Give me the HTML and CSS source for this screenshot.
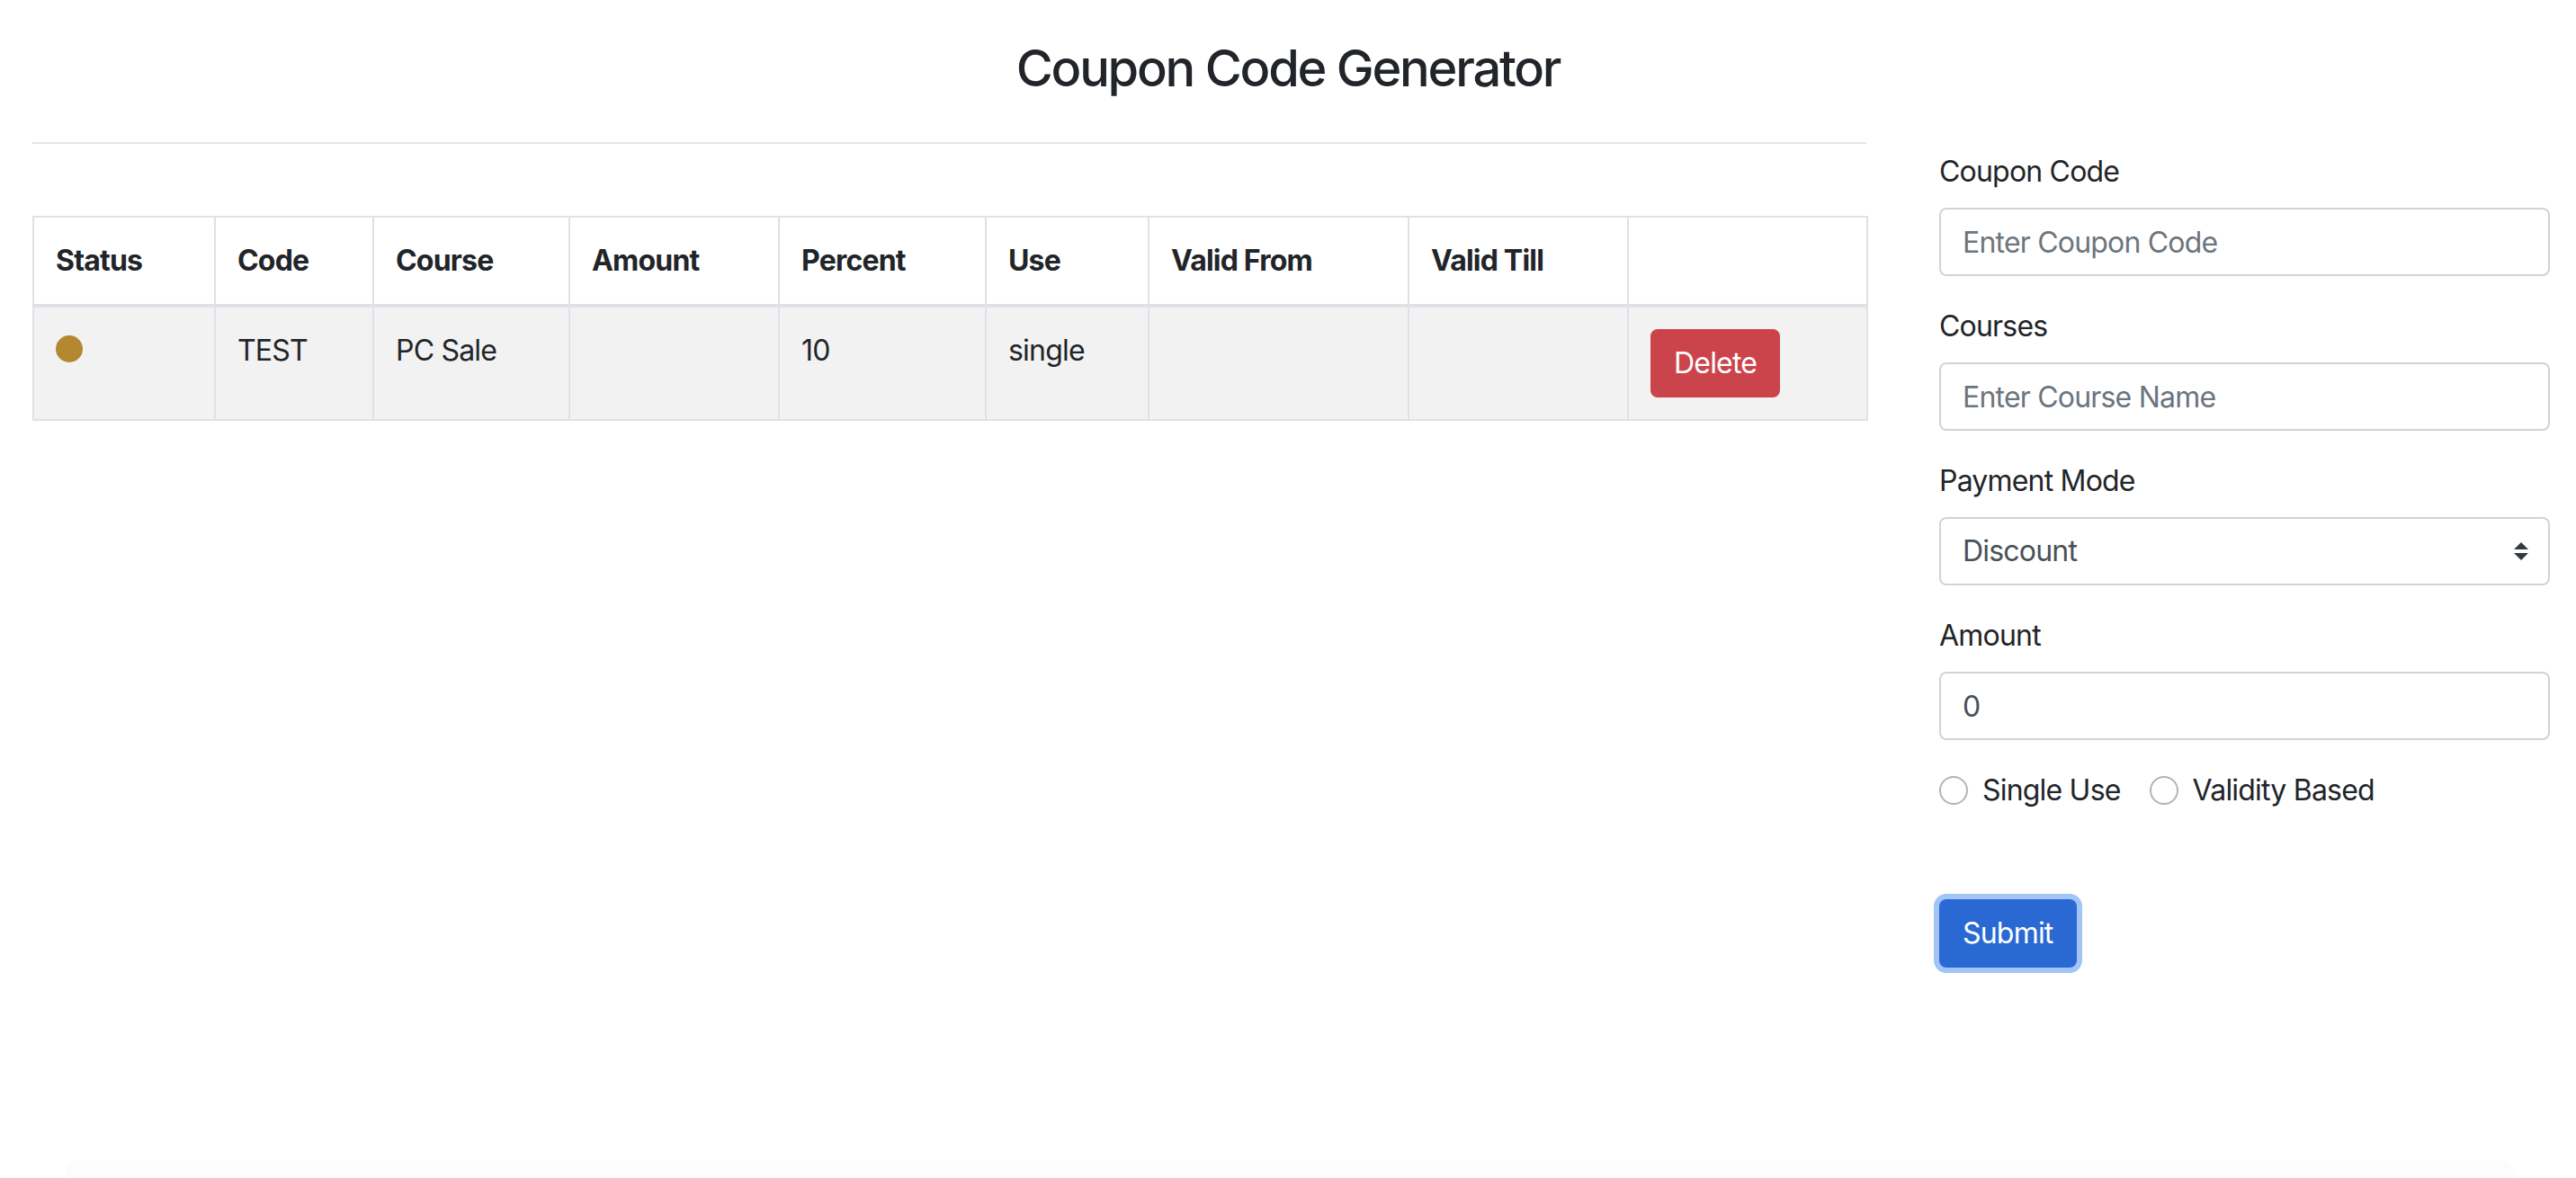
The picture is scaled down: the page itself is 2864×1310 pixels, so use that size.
FILE: index.html
```html
<!DOCTYPE html>
<html lang="en">
<head>
<meta charset="utf-8">
<title>Coupon Code Generator</title>
<link rel="stylesheet" href="styles.css">
</head>
<body>
<div class="page">
  <h3 class="title">Coupon Code Generator</h3>
  <div class="row">
    <div class="col-main">
      <hr class="divider">
      <table class="coupons">
        <thead>
          <tr>
            <th class="c-status">Status</th>
            <th class="c-code">Code</th>
            <th class="c-course">Course</th>
            <th class="c-amount">Amount</th>
            <th class="c-percent">Percent</th>
            <th class="c-use">Use</th>
            <th class="c-from">Valid From</th>
            <th class="c-till">Valid Till</th>
            <th class="c-action"></th>
          </tr>
        </thead>
        <tbody>
          <tr>
            <td><span class="dot"></span></td>
            <td>TEST</td>
            <td>PC Sale</td>
            <td></td>
            <td>10</td>
            <td>single</td>
            <td></td>
            <td></td>
            <td><button class="btn btn-danger" type="button">Delete</button></td>
          </tr>
        </tbody>
      </table>
    </div>
    <div class="col-side">
      <form class="coupon-form">
        <div class="form-group">
          <label class="form-label" for="code">Coupon Code</label>
          <input class="form-control" id="code" type="text" placeholder="Enter Coupon Code">
        </div>
        <div class="form-group">
          <label class="form-label" for="course">Courses</label>
          <input class="form-control" id="course" type="text" placeholder="Enter Course Name">
        </div>
        <div class="form-group">
          <label class="form-label" for="mode">Payment Mode</label>
          <div class="select-wrap">
            <select class="form-control custom-select" id="mode">
              <option>Discount</option>
            </select>
            <svg class="select-arrows" width="16" height="20" viewBox="0 0 4 5"><path fill="#343a40" d="M2 0L0 2h4zm0 5L0 3h4z"/></svg>
          </div>
        </div>
        <div class="form-group">
          <label class="form-label" for="amount">Amount</label>
          <input class="form-control" id="amount" type="text" value="0">
        </div>
        <div class="radios">
          <label class="radio"><span class="radio-circle"></span><span>Single Use</span></label>
          <label class="radio"><span class="radio-circle"></span><span>Validity Based</span></label>
        </div>
        <button class="btn btn-primary" type="button">Submit</button>
      </form>
    </div>
  </div>
  <div class="footer-strip"></div>
</div>
</body>
</html>
```

FILE: styles.css
```css
* { box-sizing: border-box; }
html, body { margin: 0; padding: 0; background: #ffffff; }
body {
  font-family: Inter, "Liberation Sans", Arial, sans-serif;
  font-size: 32px;
  line-height: 48px;
  letter-spacing: -0.025em;
  color: #212529;
}
.page {
  min-height: 1310px;
  display: flex;
  flex-direction: column;
  overflow: hidden;
}
.title {
  margin: 43px 0 16px;
  font-size: 56px;
  line-height: 67px;
  font-weight: 500;
  letter-spacing: -0.04em;
  text-align: center;
  color: #212529;
}
.row {
  display: flex;
  align-items: flex-start;
}
.col-main {
  width: 2039px;
  margin-left: 36px;
}
.divider {
  margin: 32px 0 80px;
  border: 0;
  border-top: 2px solid #e5e5e5;
  height: 0;
}
.coupons {
  width: 2039px;
  table-layout: fixed;
  border-collapse: collapse;
  border: 2px solid #dee2e6;
}
.coupons th, .coupons td {
  border: 2px solid #dee2e6;
  padding: 24px;
  text-align: left;
  vertical-align: top;
  font-size: 32px;
  line-height: 48px;
}
.coupons th {
  font-weight: 700;
  border-bottom-width: 4px;
}
.coupons tbody tr { background: #f2f2f2; }
.c-status { width: 202px; }
.c-code { width: 176px; }
.c-course { width: 218px; }
.c-amount { width: 233px; }
.c-percent { width: 230px; }
.c-use { width: 181px; }
.c-from { width: 289px; }
.c-till { width: 244px; }
.c-action { width: 266px; }
.dot {
  display: block;
  width: 30px;
  height: 30px;
  margin-top: 7px;
  border-radius: 50%;
  background: #b3882f;
}
.btn {
  display: inline-block;
  font-family: inherit;
  font-size: 32px;
  line-height: 48px;
  letter-spacing: -0.025em;
  padding: 12px 24px;
  border: 2px solid transparent;
  border-radius: 8px;
  color: #ffffff;
  cursor: pointer;
}
.btn-danger {
  background: #cc444b;
  border-color: #cc444b;
}
.btn-primary {
  background: #2a69d3;
  border-color: #2a69d3;
  box-shadow: 0 0 0 6px #a2c5f7;
  margin-top: 97px;
}
.col-side {
  width: 679px;
  margin-left: 81px;
  padding-top: 41px;
}
.form-group { margin-bottom: 32px; }
.form-label {
  display: block;
  margin-bottom: 16px;
  color: #212529;
}
.form-control {
  display: block;
  width: 100%;
  height: 76px;
  padding: 12px 24px;
  font-family: inherit;
  font-size: 32px;
  line-height: 48px;
  letter-spacing: -0.025em;
  color: #495057;
  background: #ffffff;
  border: 2px solid #ced4da;
  border-radius: 8px;
  outline: none;
}
.form-control::placeholder { color: #6c757d; opacity: 1; }
.select-wrap { position: relative; }
.custom-select {
  -webkit-appearance: none;
  appearance: none;
  padding-right: 64px;
}
.select-arrows {
  position: absolute;
  right: 24px;
  top: 28px;
  pointer-events: none;
}
.radios {
  display: flex;
  gap: 32px;
}
.radio {
  display: flex;
  align-items: center;
  gap: 16px;
  color: #212529;
}
.radio-circle {
  width: 32px;
  height: 32px;
  border: 2px solid #adb5bd;
  border-radius: 50%;
  background: #ffffff;
}
.footer-strip {
  margin: auto 70px 0 73px;
  height: 20px;
  background: #fcfcfc;
  border-radius: 12px 12px 0 0;
}
```
